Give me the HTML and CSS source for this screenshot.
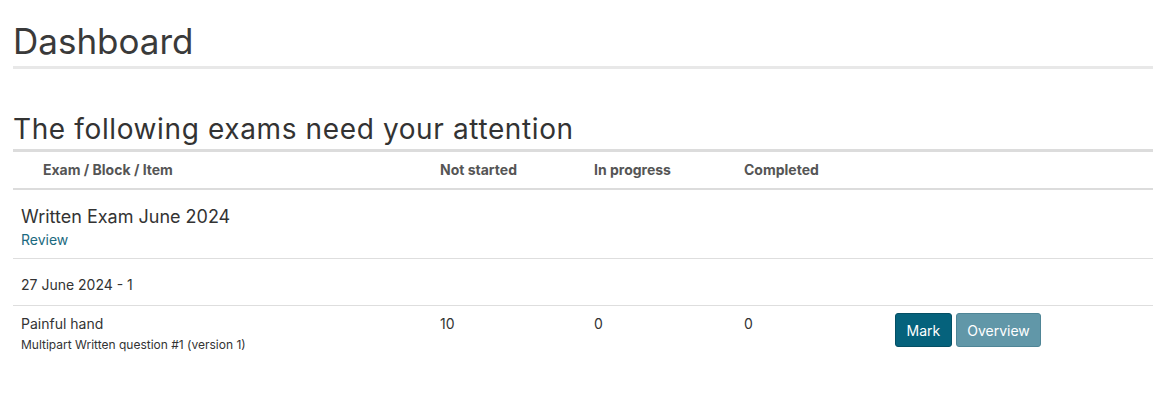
FILE: index.html
```html
<!DOCTYPE html>
<html lang="en">
<head>
<meta charset="utf-8">
<title>Dashboard</title>
<link rel="stylesheet" href="styles.css">
</head>
<body>
<main class="page">
  <h1 class="page-title">Dashboard</h1>
  <h2 class="section-title">The following exams need your attention</h2>
  <table class="exams">
    <colgroup>
      <col class="c-name"><col class="c-num"><col class="c-num2"><col class="c-num3"><col class="c-act">
    </colgroup>
    <thead>
      <tr>
        <th class="first">Exam / Block / Item</th>
        <th>Not started</th>
        <th>In progress</th>
        <th>Completed</th>
        <th></th>
      </tr>
    </thead>
    <tbody>
      <tr class="exam-row">
        <td colspan="5">
          <div class="exam-name">Written Exam June 2024</div>
          <a class="review" href="#">Review</a>
        </td>
      </tr>
      <tr class="block-row">
        <td colspan="5">27 June 2024 - 1</td>
      </tr>
      <tr class="item-row">
        <td>
          <div class="item-name">Painful hand</div>
          <div class="item-sub">Multipart Written question #1 (version 1)</div>
        </td>
        <td>10</td>
        <td>0</td>
        <td>0</td>
        <td class="actions">
          <button class="btn btn-primary">Mark</button><button class="btn btn-muted">Overview</button>
        </td>
      </tr>
    </tbody>
  </table>
</main>
</body>
</html>
```
FILE: styles.css
```css
html, body {
  margin: 0;
  padding: 0;
  background: #fff;
}
body {
  font-family: Inter, "Noto Sans", sans-serif;
  color: #333;
}
.page {
  padding: 0 16px 0 13px;
}
.page-title {
  margin: 0;
  padding-top: 20px;
  font-size: 35px;
  font-weight: 400;
  line-height: 42px;
  color: #3a3a3a;
  padding-bottom: 4px;
  border-bottom: 3px solid #e8e8e8;
}
.section-title {
  margin: 41px 0 0 0;
  font-size: 28px;
  letter-spacing: 0.62px;
  font-weight: 400;
  line-height: 38px;
  color: #333;
  border-bottom: 3px solid #dcdcdc;
  padding-bottom: 1px;
}
.exams {
  width: 100%;
  border-collapse: collapse;
  font-size: 14px;
}
.c-name { width: 419px; }
.c-num { width: 154px; }
.c-num2 { width: 150px; }
.c-num3 { width: 151px; }
.exams th {
  text-align: left;
  font-weight: 700;
  font-size: 14px;
  color: #555;
  padding: 9px 8px 9px 8px;
  line-height: 18px;
  border-bottom: 2px solid #dcdcdc;
}
.exams th.first {
  padding-left: 30px;
}
.exams td {
  padding: 8px 8px;
  vertical-align: top;
  border-bottom: 1px solid #dedede;
  line-height: 18px;
}
.exam-row td {
  padding-top: 16px;
  padding-bottom: 9px;
}
.exam-name {
  font-size: 18px;
  line-height: 22px;
  color: #333;
}
.review {
  display: inline-block;
  margin-top: 3px;
  font-size: 14px;
  color: #1b6a80;
  text-decoration: none;
}
.block-row td {
  padding-top: 17px;
  padding-bottom: 11px;
}
.item-row td {
  border-bottom: none;
  padding-top: 9px;
}
.item-name {
  font-size: 14px;
  line-height: 18px;
}
.item-sub {
  font-size: 12px;
  line-height: 16px;
  margin-top: 4px;
}
.actions {
  white-space: nowrap;
}
.item-row td.actions {
  padding-top: 7px;
}
.btn {
  font-family: inherit;
  font-size: 14px;
  border-radius: 3px;
  padding: 0 10.5px;
  height: 34px;
  color: #fff;
  border: 1px solid transparent;
  margin-right: 4px;
  cursor: pointer;
}
.btn-primary {
  background: #05627c;
  border-color: #044f64;
}
.btn-muted {
  background: #6197a8;
  border-color: #4f8596;
}
```
